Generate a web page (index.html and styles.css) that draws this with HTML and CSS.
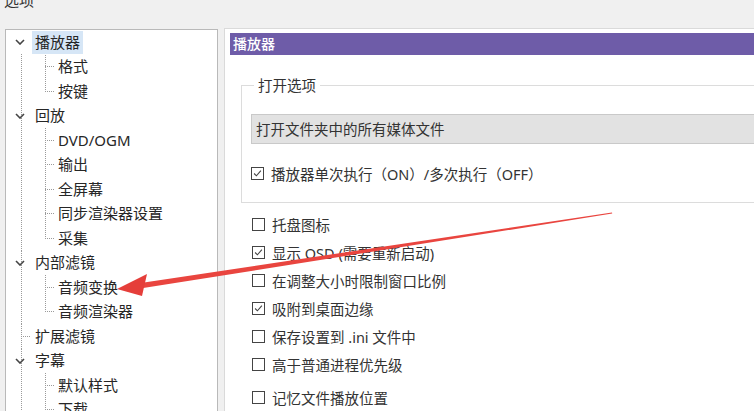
FILE: index.html
```html
<!DOCTYPE html>
<html lang="zh-CN">
<head>
<meta charset="utf-8">
<title>选项</title>
<link rel="stylesheet" href="styles.css">
</head>
<body>
<div class="title">选项</div>
<div class="main">
  <div class="tree-panel">
    <div class="tree">
      <div class="node first">
        <div class="row parent"><svg class="chev" viewBox="0 0 10 6"><polyline points="1,1 5,5 9,1"/></svg><span class="label sel">播放器</span></div>
        <div class="children">
          <div class="row child"><span class="label">格式</span></div>
          <div class="row child"><span class="label">按键</span></div>
        </div>
      </div>
      <div class="node">
        <div class="row parent"><svg class="chev" viewBox="0 0 10 6"><polyline points="1,1 5,5 9,1"/></svg><span class="label">回放</span></div>
        <div class="children">
          <div class="row child"><span class="label">DVD/OGM</span></div>
          <div class="row child"><span class="label">输出</span></div>
          <div class="row child"><span class="label">全屏幕</span></div>
          <div class="row child"><span class="label">同步渲染器设置</span></div>
          <div class="row child"><span class="label">采集</span></div>
        </div>
      </div>
      <div class="node">
        <div class="row parent"><svg class="chev" viewBox="0 0 10 6"><polyline points="1,1 5,5 9,1"/></svg><span class="label">内部滤镜</span></div>
        <div class="children">
          <div class="row child"><span class="label">音频变换</span></div>
          <div class="row child"><span class="label">音频渲染器</span></div>
        </div>
      </div>
      <div class="node">
        <div class="row leaf"><span class="label">扩展滤镜</span></div>
      </div>
      <div class="node">
        <div class="row parent"><svg class="chev" viewBox="0 0 10 6"><polyline points="1,1 5,5 9,1"/></svg><span class="label">字幕</span></div>
        <div class="children">
          <div class="row child"><span class="label">默认样式</span></div>
          <div class="row child"><span class="label">下载</span></div>
        </div>
      </div>
    </div>
  </div>
  <div class="content">
    <div class="header">播放器</div>
    <fieldset class="group">
      <legend>打开选项</legend>
      <div class="select">打开文件夹中的所有媒体文件</div>
      <div class="check inner"><span class="cb on"><svg viewBox="0 0 13 13"><polyline points="2.5,6.5 5.2,9.2 10.5,3.2"/></svg></span>播放器单次执行（ON）/多次执行（OFF）</div>
    </fieldset>
    <div class="checks">
      <div class="check"><span class="cb"></span>托盘图标</div>
      <div class="check"><span class="cb on"><svg viewBox="0 0 13 13"><polyline points="2.5,6.5 5.2,9.2 10.5,3.2"/></svg></span>显示 OSD (需要重新启动)</div>
      <div class="check"><span class="cb"></span>在调整大小时限制窗口比例</div>
      <div class="check"><span class="cb on"><svg viewBox="0 0 13 13"><polyline points="2.5,6.5 5.2,9.2 10.5,3.2"/></svg></span>吸附到桌面边缘</div>
      <div class="check"><span class="cb"></span>保存设置到 .ini 文件中</div>
      <div class="check"><span class="cb"></span>高于普通进程优先级</div>
      <div class="check last"><span class="cb"></span>记忆文件播放位置</div>
    </div>
  </div>
</div>
<svg class="arrow" viewBox="0 0 754 411" width="754" height="411">
  <polygon class="shaft" points="140,288.6 139,283.2 612,212.4 612.2,213.6"/>
  <polygon class="head" points="117,289 147,274 142,296"/>
</svg>
</body>
</html>
```

FILE: styles.css
```css
html, body {
  margin: 0;
  padding: 0;
}
body {
  width: 754px;
  height: 411px;
  overflow: hidden;
  background: #f0f0f0;
  font-family: "Noto Sans", "Noto Sans CJK SC", sans-serif;
  color: #262626;
  position: relative;
}
.title {
  margin-top: -8px;
  height: 36px;
  padding-left: 4px;
  font-size: 15px;
  line-height: 16px;
  color: #333;
}
.main {
  display: flex;
  align-items: flex-start;
  gap: 6px;
}
.tree-panel {
  flex: none;
  margin-left: 5px;
  margin-top: 1px;
  width: 211px;
  height: 400px;
  background: #fff;
  border: 1px solid #b9b9b9;
}
.tree {
  font-size: 15px;
}
.node {
  background-image: repeating-linear-gradient(to bottom, #9a9a9a 0 1px, transparent 1px 2px);
  background-size: 1px 100%;
  background-position: 15px 0;
  background-repeat: no-repeat;
}
.node.first {
  background-position: 15px 24px;
}
.row {
  height: 24.5px;
  display: flex;
  align-items: center;
  white-space: nowrap;
}
.label {
  padding: 0 3px;
  height: 23px;
  line-height: 23px;
}
.label.sel {
  background: #d6e6f6;
}
.parent {
  padding-left: 9px;
}
.chev {
  width: 10px;
  height: 6px;
  margin-right: 7px;
  fill: none;
  stroke: #444;
  stroke-width: 1.6;
}
.leaf {
  padding-left: 26px;
  background-image: repeating-linear-gradient(to right, #9a9a9a 0 1px, transparent 1px 2px);
  background-size: 10px 1px;
  background-position: 15px 50%;
  background-repeat: no-repeat;
}
.children {
  background-image: repeating-linear-gradient(to bottom, #9a9a9a 0 1px, transparent 1px 2px);
  background-size: 1px calc(100% - 12px);
  background-position: 39px 0;
  background-repeat: no-repeat;
}
.child {
  padding-left: 49px;
  background-image: repeating-linear-gradient(to right, #9a9a9a 0 1px, transparent 1px 2px);
  background-size: 10px 1px;
  background-position: 39px 50%;
  background-repeat: no-repeat;
}
.content {
  width: 560px;
  flex: none;
  height: 400px;
  background: #fff;
  border: 1px solid #dadada;
  padding: 4px 0 0 5px;
  box-sizing: border-box;
  font-size: 14.5px;
  color: #333;
}
.header {
  height: 22px;
  line-height: 22px;
  background: #6e5ca8;
  color: #fff;
  padding-left: 3px;
  font-size: 14px;
  font-weight: 500;
}
.group {
  margin: 21px 0 0 11px;
  padding: 0 0 19px 9px;
  border: 1px solid #dcdcdc;
  border-right: none;
  min-width: 0;
}
.group legend {
  padding: 0 4px;
  margin-left: 3px;
  line-height: 18px;
  height: 18px;
  color: #333;
}
.select {
  margin-top: 20px;
  height: 30px;
  line-height: 28px;
  box-sizing: border-box;
  background: #e2e2e2;
  border: 1px solid #c9c9c9;
  border-right: none;
  padding-left: 4px;
}
.check {
  height: 20px;
  display: flex;
  align-items: center;
  gap: 7px;
  white-space: nowrap;
}
.check.inner {
  margin-top: 19px;
}
.checks {
  margin: 11px 0 0 22px;
  display: flex;
  flex-direction: column;
  gap: 8px;
}
.check.last {
  margin-top: 5px;
}
.cb {
  width: 13px;
  height: 13px;
  box-sizing: border-box;
  border: 1px solid #444;
  background: #fff;
  flex: none;
  display: flex;
}
.cb svg {
  width: 11px;
  height: 11px;
  fill: none;
  stroke: #444;
  stroke-width: 1.3;
}
.arrow {
  position: absolute;
  left: 0;
  top: 0;
  pointer-events: none;
}
.arrow .shaft {
  fill: #e9453f;
}
.arrow .head {
  fill: #e53e3a;
}
```
